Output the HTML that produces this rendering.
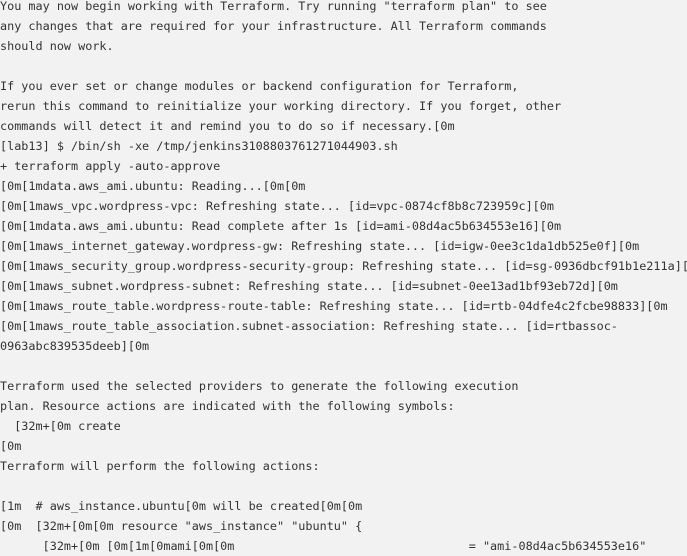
<!DOCTYPE html>
<html><head><meta charset="utf-8"><style>
html,body{margin:0;padding:0;background:#f2f2f2;width:687px;height:549px;overflow:hidden}
pre{margin:0;position:absolute;left:0;top:-4px;font-family:"DejaVu Sans Mono","Liberation Mono",monospace;font-size:11.8px;line-height:20px;color:#333;white-space:pre}
</style></head><body><pre>You may now begin working with Terraform. Try running "terraform plan" to see
any changes that are required for your infrastructure. All Terraform commands
should now work.

If you ever set or change modules or backend configuration for Terraform,
rerun this command to reinitialize your working directory. If you forget, other
commands will detect it and remind you to do so if necessary.[0m
[lab13] $ /bin/sh -xe /tmp/jenkins3108803761271044903.sh
+ terraform apply -auto-approve
[0m[1mdata.aws_ami.ubuntu: Reading...[0m[0m
[0m[1maws_vpc.wordpress-vpc: Refreshing state... [id=vpc-0874cf8b8c723959c][0m
[0m[1mdata.aws_ami.ubuntu: Read complete after 1s [id=ami-08d4ac5b634553e16][0m
[0m[1maws_internet_gateway.wordpress-gw: Refreshing state... [id=igw-0ee3c1da1db525e0f][0m
[0m[1maws_security_group.wordpress-security-group: Refreshing state... [id=sg-0936dbcf91b1e211a][0m
[0m[1maws_subnet.wordpress-subnet: Refreshing state... [id=subnet-0ee13ad1bf93eb72d][0m
[0m[1maws_route_table.wordpress-route-table: Refreshing state... [id=rtb-04dfe4c2fcbe98833][0m
[0m[1maws_route_table_association.subnet-association: Refreshing state... [id=rtbassoc-
0963abc839535deeb][0m

Terraform used the selected providers to generate the following execution
plan. Resource actions are indicated with the following symbols:
  [32m+[0m create
[0m
Terraform will perform the following actions:

[1m  # aws_instance.ubuntu[0m will be created[0m[0m
[0m  [32m+[0m[0m resource "aws_instance" "ubuntu" {
      [32m+[0m [0m[1m[0mami[0m[0m                                 = "ami-08d4ac5b634553e16"
</pre></body></html>
